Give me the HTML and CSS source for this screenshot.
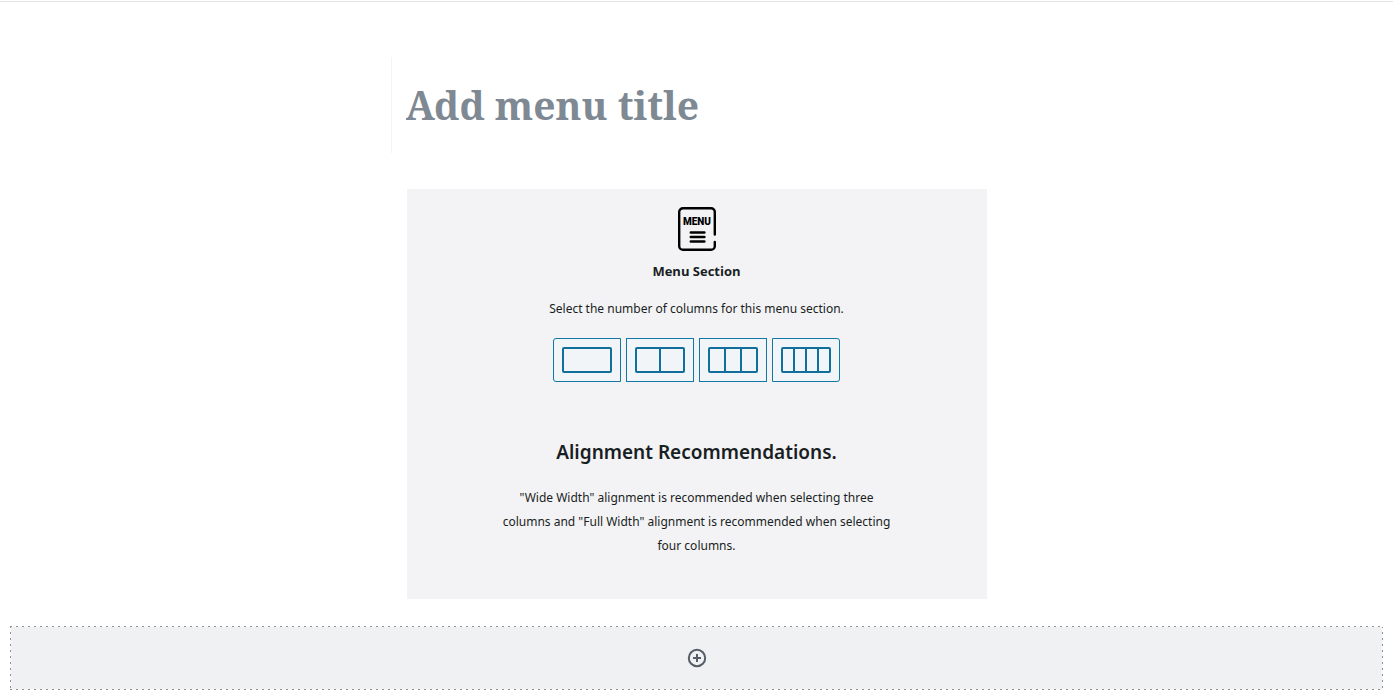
FILE: index.html
```html
<!DOCTYPE html>
<html lang="en">
<head>
<meta charset="utf-8">
<meta name="viewport" content="width=device-width, initial-scale=1">
<title>Add menu</title>
<link rel="stylesheet" href="styles.css">
</head>
<body>
<main class="editor">
  <div class="content">
    <input class="title" type="text" aria-label="Menu title" placeholder="Add menu title">
    <section class="placeholder">
      <svg class="menu-icon" width="38" height="44" viewBox="0 0 38 44" aria-hidden="true">
        <path d="M36.800 27.500V5a3.800 3.800 0 0 0-3.800-3.800H5A3.800 3.800 0 0 0 1.200 5v34A3.800 3.800 0 0 0 5 42.800h28a3.800 3.800 0 0 0 3.800-3.800v-4" fill="none" stroke="#000" stroke-width="2.400" stroke-linecap="round"/>
        <path d="M12.800 25.500h13.600M12.800 30h13.600M12.800 34.500h13.600" stroke="#000" stroke-width="2.500" stroke-linecap="round"/>
        <text class="menu-icon-text" x="19" y="18" text-anchor="middle">MENU</text>
      </svg>
      <h2 class="label">Menu Section</h2>
      <p class="instructions">Select the number of columns for this menu section.</p>
      <div class="choices" role="group" aria-label="Number of columns">
        <button class="choice" type="button" aria-label="One column">
          <svg width="50" height="26" viewBox="0 0 50 26"><rect x="1" y="1" width="48" height="24" rx="1"/></svg>
        </button>
        <button class="choice" type="button" aria-label="Two columns">
          <svg width="50" height="26" viewBox="0 0 50 26"><rect x="1" y="1" width="48" height="24" rx="1"/><path d="M25 1v24"/></svg>
        </button>
        <button class="choice" type="button" aria-label="Three columns">
          <svg width="50" height="26" viewBox="0 0 50 26"><rect x="1" y="1" width="48" height="24" rx="1"/><path d="M17 1v24M33 1v24"/></svg>
        </button>
        <button class="choice" type="button" aria-label="Four columns">
          <svg width="50" height="26" viewBox="0 0 50 26"><rect x="1" y="1" width="48" height="24" rx="1"/><path d="M13 1v24M25 1v24M37 1v24"/></svg>
        </button>
      </div>
      <h3 class="tip-title">Alignment Recommendations.</h3>
      <p class="tip">"Wide Width" alignment is recommended when selecting three columns and "Full Width" alignment is recommended when selecting four columns.</p>
    </section>
  </div>
  <button class="appender" type="button" aria-label="Add block">
    <svg width="20" height="20" viewBox="0 0 20 20"><circle cx="10" cy="10" r="8.200"/><path d="M10 6v8M6 10h8"/></svg>
  </button>
</main>
</body>
</html>
```
FILE: styles.css
```css
* {
  box-sizing: border-box;
}

body {
  margin: 0;
  background: #fff;
  color: #191e23;
  font-family: "Noto Sans", sans-serif;
  font-size: 13px;
}

.editor {
  border-top: 1px solid #e2e4e7;
  margin-top: 1px;
  padding: 55px 10px 6px;
}

.content {
  max-width: 612px;
  margin: 0 auto;
}

.title {
  display: block;
  width: 100%;
  height: 96px;
  margin: 0 0 36px;
  padding: 0 14px 2px;
  border: 0;
  border-left: 1px solid #f3f4f5;
  background: transparent;
  color: #191e23;
  font-family: "Noto Serif", "DejaVu Serif", serif;
  font-size: 39px;
  font-weight: 700;
}

.title::placeholder {
  color: #7e8993;
  opacity: 1;
}

.placeholder {
  display: flex;
  flex-direction: column;
  align-items: center;
  margin: 0 16px;
  padding: 18px 14px 41px;
  background: #f3f3f5;
  text-align: center;
}

.menu-icon {
  display: block;
}

.menu-icon-text {
  font-family: Roboto, sans-serif;
  font-size: 10px;
  font-weight: 900;
}

.label {
  margin: 10px 0 0;
  font-family: "Open Sans", "Noto Sans", sans-serif;
  font-size: 13px;
  font-weight: 700;
  line-height: 20px;
}

.instructions {
  margin: 18px 0 0;
  font-size: 12px;
  line-height: 20px;
}

.choices {
  display: flex;
  gap: 5px;
  margin-top: 19px;
}

.choice {
  display: flex;
  align-items: center;
  justify-content: center;
  width: 68px;
  height: 44px;
  padding: 0;
  border: 1px solid #1178a6;
  background: #f1f5f8;
}

.choice:first-child {
  border-radius: 3px 0 0 3px;
}

.choice:last-child {
  border-radius: 0 3px 3px 0;
}

.choice svg {
  fill: none;
  stroke: #11709b;
  stroke-width: 2;
}

.tip-title {
  margin: 56px 0 0;
  font-size: 19px;
  font-weight: 600;
  line-height: 28px;
}

.tip {
  max-width: 400px;
  margin: 20px 0 0;
  font-size: 12px;
  line-height: 24px;
}

.appender {
  --dash: #8f9296 0 2px, #fafafa 2px 6px;
  display: flex;
  align-items: center;
  justify-content: center;
  width: 100%;
  height: 64px;
  margin-top: 27px;
  padding: 0;
  border: 0;
  background:
    repeating-linear-gradient(90deg, var(--dash)) top / 100% 1px no-repeat,
    repeating-linear-gradient(90deg, var(--dash)) bottom / 100% 1px no-repeat,
    repeating-linear-gradient(180deg, var(--dash)) left / 1px 100% no-repeat,
    repeating-linear-gradient(180deg, var(--dash)) right / 1px 100% no-repeat,
    #f0f1f3;
}

.appender svg {
  fill: none;
  stroke: #555d66;
  stroke-width: 2;
}
```
